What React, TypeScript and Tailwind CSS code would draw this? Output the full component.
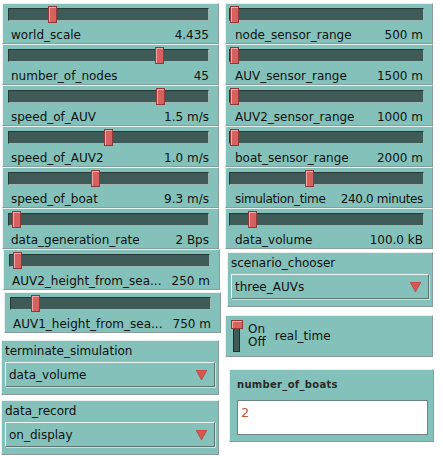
import React from "react";

type SliderProps = {
  label: string;
  value: string;
  pos: number;
  right?: boolean;
  tight?: boolean;
  cls?: string;
};

function Slider({ label, value, pos, right = false, tight = false, cls = "" }: SliderProps) {
  return (
    <div
      className={
        "h-[41px] border border-[#8a9c99] border-t-[#e6f2f0] border-l-[#e6f2f0] bg-[#83c1ba] pt-[4px] " +
        (right ? "pl-[3px] pr-[8px] " : "pl-[5px] pr-[9px] ") +
        cls
      }
    >
      <div className="relative h-[13px] border border-[#263936] border-b-[#9fb7b3] border-r-[#9fb7b3] bg-[#3e5b57]">
        <div
          className="absolute top-[-3px] h-[17px] w-[9px] border border-[#8d3b3a] bg-[#d7615f] shadow-[inset_1px_1px_0_#f2a8a6]"
          style={{ left: pos }}
        />
      </div>
      <div
        className={
          "mt-[7px] flex justify-between whitespace-nowrap text-[12px] leading-[14px] text-[#111] " +
          (right ? "pl-[6px] pr-[1px] " : "pl-[3px] pr-0 ") +
          (tight ? "tracking-[-0.35px] pl-[4px]" : "")
        }
      >
        <span>{label}</span>
        <span>{value}</span>
      </div>
    </div>
  );
}

function Chooser({ label, value, cls = "" }: { label: string; value: string; cls?: string }) {
  return (
    <div
      className={
        "h-[55px] border border-[#8a9c99] border-t-[#e6f2f0] border-l-[#e6f2f0] bg-[#83c1ba] px-[3px] pt-[3px] " +
        cls
      }
    >
      <div className="text-[12px] leading-[14px] text-[#111]">{label}</div>
      <div className="mt-[4px] flex h-[25px] items-center justify-between border border-[#5d7471] border-t-[#eef6f5] border-l-[#eef6f5] bg-[#83c1ba] pl-[3px] pr-[7px] shadow-[1px_1px_0_#c9e1de]">
        <span className="text-[12px] text-[#111]">{value}</span>
        <svg width="11" height="10" viewBox="0 0 11 10">
          <polygon points="0,0 11,0 5.5,10" fill="#d95550" stroke="#a2403c" strokeWidth="0.6" />
        </svg>
      </div>
    </div>
  );
}

export default function App() {
  return (
    <div
      className="flex h-[460px] w-[443px] gap-[6px] bg-white pl-[2px] pt-[3px]"
      style={{ fontFamily: '"DejaVu Sans", Verdana, sans-serif' }}
    >
      <div className="flex w-[217px] flex-col">
        <Slider label="world_scale" value="4.435" pos={39} />
        <Slider label="number_of_nodes" value="45" pos={146} />
        <Slider label="speed_of_AUV" value="1.5 m/s" pos={147} />
        <Slider label="speed_of_AUV2" value="1.0 m/s" pos={95} />
        <Slider label="speed_of_boat" value="9.3 m/s" pos={82} />
        <Slider label="data_generation_rate" value="2 Bps" pos={3} />
        <Slider label="AUV2_height_from_sea..." value="250 m" pos={3} cls="ml-[1px] mr-[-1px]" />
        <Slider label="AUV1_height_from_sea..." value="750 m" pos={20} cls="mt-[2px] ml-[2px] mr-[-2px]" />
        <Chooser label="terminate_simulation" value="data_volume" cls="mt-[7px] ml-[-1px]" />
        <Chooser label="data_record" value="on_display" cls="mt-[5px] ml-[-1px]" />
      </div>
      <div className="flex w-[208px] flex-col">
        <Slider right label="node_sensor_range" value="500 m" pos={0} />
        <Slider right label="AUV_sensor_range" value="1500 m" pos={0} />
        <Slider right label="AUV2_sensor_range" value="1000 m" pos={0} />
        <Slider right label="boat_sensor_range" value="2000 m" pos={0} />
        <Slider right tight label="simulation_time" value="240.0 minutes" pos={75} />
        <Slider right label="data_volume" value="100.0 kB" pos={18} />
        <Chooser label="scenario_chooser" value="three_AUVs" cls="mt-[3px] ml-[2px]" />
        <div className="mt-[8px] flex h-[42px] items-center border border-[#8a9c99] border-t-[#e6f2f0] border-l-[#e6f2f0] bg-[#83c1ba] pl-[7px]">
          <div className="relative h-[32px] w-[7px] border border-[#1f302d] bg-[#3e5b57]">
            <div className="absolute left-[-3px] top-[-1px] h-[9px] w-[12px] border border-[#8d3b3a] bg-[#d7615f] shadow-[inset_1px_1px_0_#f2a8a6]" />
          </div>
          <div className="ml-[8px] flex flex-col text-[12px] leading-[13px] text-[#111]">
            <span>On</span>
            <span>Off</span>
          </div>
          <span className="ml-[9px] text-[12px] text-[#111]">real_time</span>
        </div>
        <div className="ml-[4px] mt-[12px] h-[73px] w-[205px] border border-[#8a9c99] border-t-[#e6f2f0] border-l-[#e6f2f0] bg-[#83c1ba] pl-[7px] pr-[5px] pt-[9px]">
          <div className="text-[10px] font-bold leading-[12px] tracking-[0.3px] text-[#2a2a2a]">number_of_boats</div>
          <div className="mt-[9px] h-[35px] border border-[#6d8482] bg-white pl-[3px] pt-[4px] text-[13px] leading-[16px] text-[#b85a3c]">
            2
          </div>
        </div>
      </div>
    </div>
  );
}
